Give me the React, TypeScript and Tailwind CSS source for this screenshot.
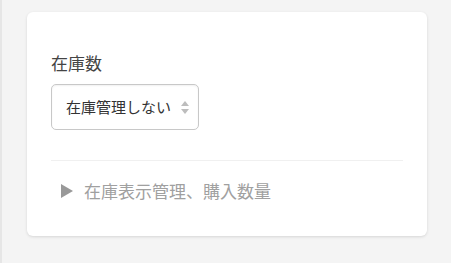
const App = () => {
  return (
    <div
      className="w-[451px] h-[263px] bg-[#f4f4f4] border-l-2 border-[#e6e6e6] pt-3 pl-[25px]"
      style={{ fontFamily: '"Noto Sans CJK JP", "Noto Sans", sans-serif' }}
    >
      <div className="w-[400px] h-[224px] bg-white rounded-md shadow-[0_1px_3px_rgba(0,0,0,0.12)] px-6 pt-[41px]">
        <label className="block text-[17px] leading-[20px] text-[#444]">在庫数</label>
        <div className="mt-[11px] w-[148px] h-[46px] border border-[#c8c8c8] rounded-[5px] flex items-center justify-between pl-[14px] pr-[8px] shadow-[inset_0_1px_2px_rgba(0,0,0,0.06)]">
          <span className="text-[15px] text-[#333]">在庫管理しない</span>
          <svg width="10" height="15" viewBox="0 0 10 15" className="fill-[#bdbdbd]">
            <path d="M5 1 L9 6 L1 6 Z" />
            <path d="M5 14 L9 9 L1 9 Z" />
          </svg>
        </div>
        <div className="mt-[30px] h-px bg-[#f0f0f0]" />
        <div className="mt-[20px] flex items-center pl-[10px] text-[17px] text-[#a0a0a0]">
          <span className="w-[12px] h-[14px] bg-[#999] [clip-path:polygon(0_0,100%_50%,0_100%)]" />
          <span className="ml-[11px] leading-[20px]">在庫表示管理、購入数量</span>
        </div>
      </div>
    </div>
  );
};

export default App;
